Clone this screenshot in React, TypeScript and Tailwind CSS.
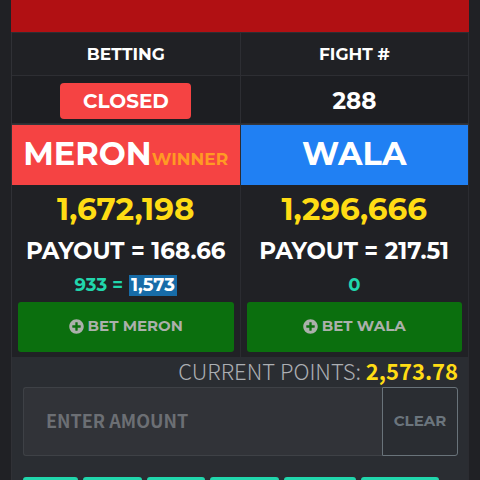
import { useState } from 'react';
import { FaPlusCircle } from 'react-icons/fa';

const quickAmounts = [
  { value: 50, width: 'w-[55px]' },
  { value: 100, width: 'w-[59px]' },
  { value: 200, width: 'w-[58px]' },
  { value: 500, width: 'w-[69px]' },
  { value: 1000, width: 'w-[72px]' },
  { value: 5000, width: 'w-[78px]' },
];

function BetButton({ label }: { label: string }) {
  return (
    <button
      type="button"
      className="flex h-[50px] w-full cursor-pointer items-center justify-center gap-1 rounded-[3px] bg-[#0b6f0e] pb-[2px] text-[15px] font-bold text-[#abb0ab]"
    >
      <FaPlusCircle className="size-[15px]" />
      {label}
    </button>
  );
}

function Side({ name, color, winner, total, payout, label, children }: any) {
  return (
    <section className="min-w-0 border-r border-[#2b2c31]">
      <h2
        className={`flex h-[60px] items-center justify-center pb-[2px] text-white ${color}`}
      >
        <span className="flex items-baseline">
          <span className="text-[32px] leading-10 font-bold">{name}</span>
          {winner && (
            <span className="text-[17px] font-bold text-[#ff9a24]">
              WINNER
            </span>
          )}
        </span>
      </h2>
      <div className="px-[6px] pb-[5px] text-center font-bold">
        <div className="h-12 text-[31px] leading-12 text-[#ffdc14]">
          {total}
        </div>
        <div className="h-9 text-[23px] leading-9 whitespace-nowrap text-white">
          PAYOUT = {payout}
        </div>
        <div className="flex h-[33px] items-center justify-center gap-[6px] text-[18px] text-[#21d6ac]">
          {children}
        </div>
        <BetButton label={label} />
      </div>
    </section>
  );
}

export default function App() {
  const [amount, setAmount] = useState('');
  return (
    <div className="h-screen overflow-hidden bg-[#202125] px-[11px] font-['Montserrat','Inter',sans-serif]">
      <main className="border-l border-[#303136] bg-[#2a2d32]">
        <div className="-ml-px h-8 bg-[#b11013]" />
        <table className="w-full table-fixed border-collapse bg-[#202125] text-center text-white">
          <thead>
            <tr className="h-[43px] text-[17px]">
              <th className="border border-l-0 border-[#2d2e33] p-0 pt-[2px] font-bold">
                BETTING
              </th>
              <th className="border border-[#2d2e33] p-0 pt-[2px] font-bold">
                FIGHT #
              </th>
            </tr>
          </thead>
          <tbody className="bg-[#1d1e22]">
            <tr className="h-[48px]">
              <td className="border border-l-0 border-[#2d2e33] p-0 pt-[2px]">
                <span className="inline-flex h-[36px] w-[131px] items-center justify-center rounded-[4px] bg-[#f54343] align-middle text-[20px] font-bold">
                  CLOSED
                </span>
              </td>
              <td className="border border-[#2d2e33] p-0 pt-[4px] text-[23px] font-bold">
                288
              </td>
            </tr>
          </tbody>
        </table>

        <div className="grid grid-cols-2 border-t border-[#34353a] bg-[#202125]">
          <Side
            name="MERON"
            color="bg-[#f54343]"
            winner
            total="1,672,198"
            payout="168.66"
            label="BET MERON"
          >
            933 =
            <span className="bg-[#176ca8] px-[2px] leading-[21px] text-white">
              1,573
            </span>
          </Side>
          <Side
            name="WALA"
            color="bg-[#2080f3]"
            total="1,296,666"
            payout="217.51"
            label="BET WALA"
          >
            0
          </Side>
        </div>

        <div className="border-r border-[#2b2c31] pr-[10px] pl-[11px]">
          <div className="h-[30px] text-right font-['Source_Sans_Pro','Noto_Sans_CJK_SC',sans-serif] text-[22px] leading-[26px] font-light text-[#acafb3]">
            CURRENT POINTS:{' '}
            <strong className="font-bold text-[#ffdc14]">2,573.78</strong>
          </div>
          <div className="flex h-[69px]">
            <input
              type="text"
              aria-label="Enter amount"
              placeholder="ENTER AMOUNT"
              value={amount}
              onChange={(e) => setAmount(e.target.value)}
              className="min-w-0 flex-1 rounded-l-[3px] border border-r-0 border-[#3e4146] bg-[#313338] pb-[2px] pl-[22px] font-['Source_Sans_Pro','Noto_Sans_CJK_SC',sans-serif] text-[18px] font-bold text-white outline-none placeholder:text-[#6c6f74]"
            />
            <button
              type="button"
              onClick={() => setAmount('')}
              className="w-[76px] cursor-pointer rounded-r-[3px] border border-[#69737a] text-[15px] font-bold text-[#6b757d]"
            >
              CLEAR
            </button>
          </div>
          <div className="mt-[21px] flex gap-[5px]">
            {quickAmounts.map(({ value, width }) => (
              <button
                key={value}
                type="button"
                aria-label={`Bet ${value}`}
                onClick={() => setAmount(String(value))}
                className={`h-10 cursor-pointer rounded-[3px] bg-[#21d6ac] ${width}`}
              />
            ))}
          </div>
        </div>
      </main>
    </div>
  );
}
